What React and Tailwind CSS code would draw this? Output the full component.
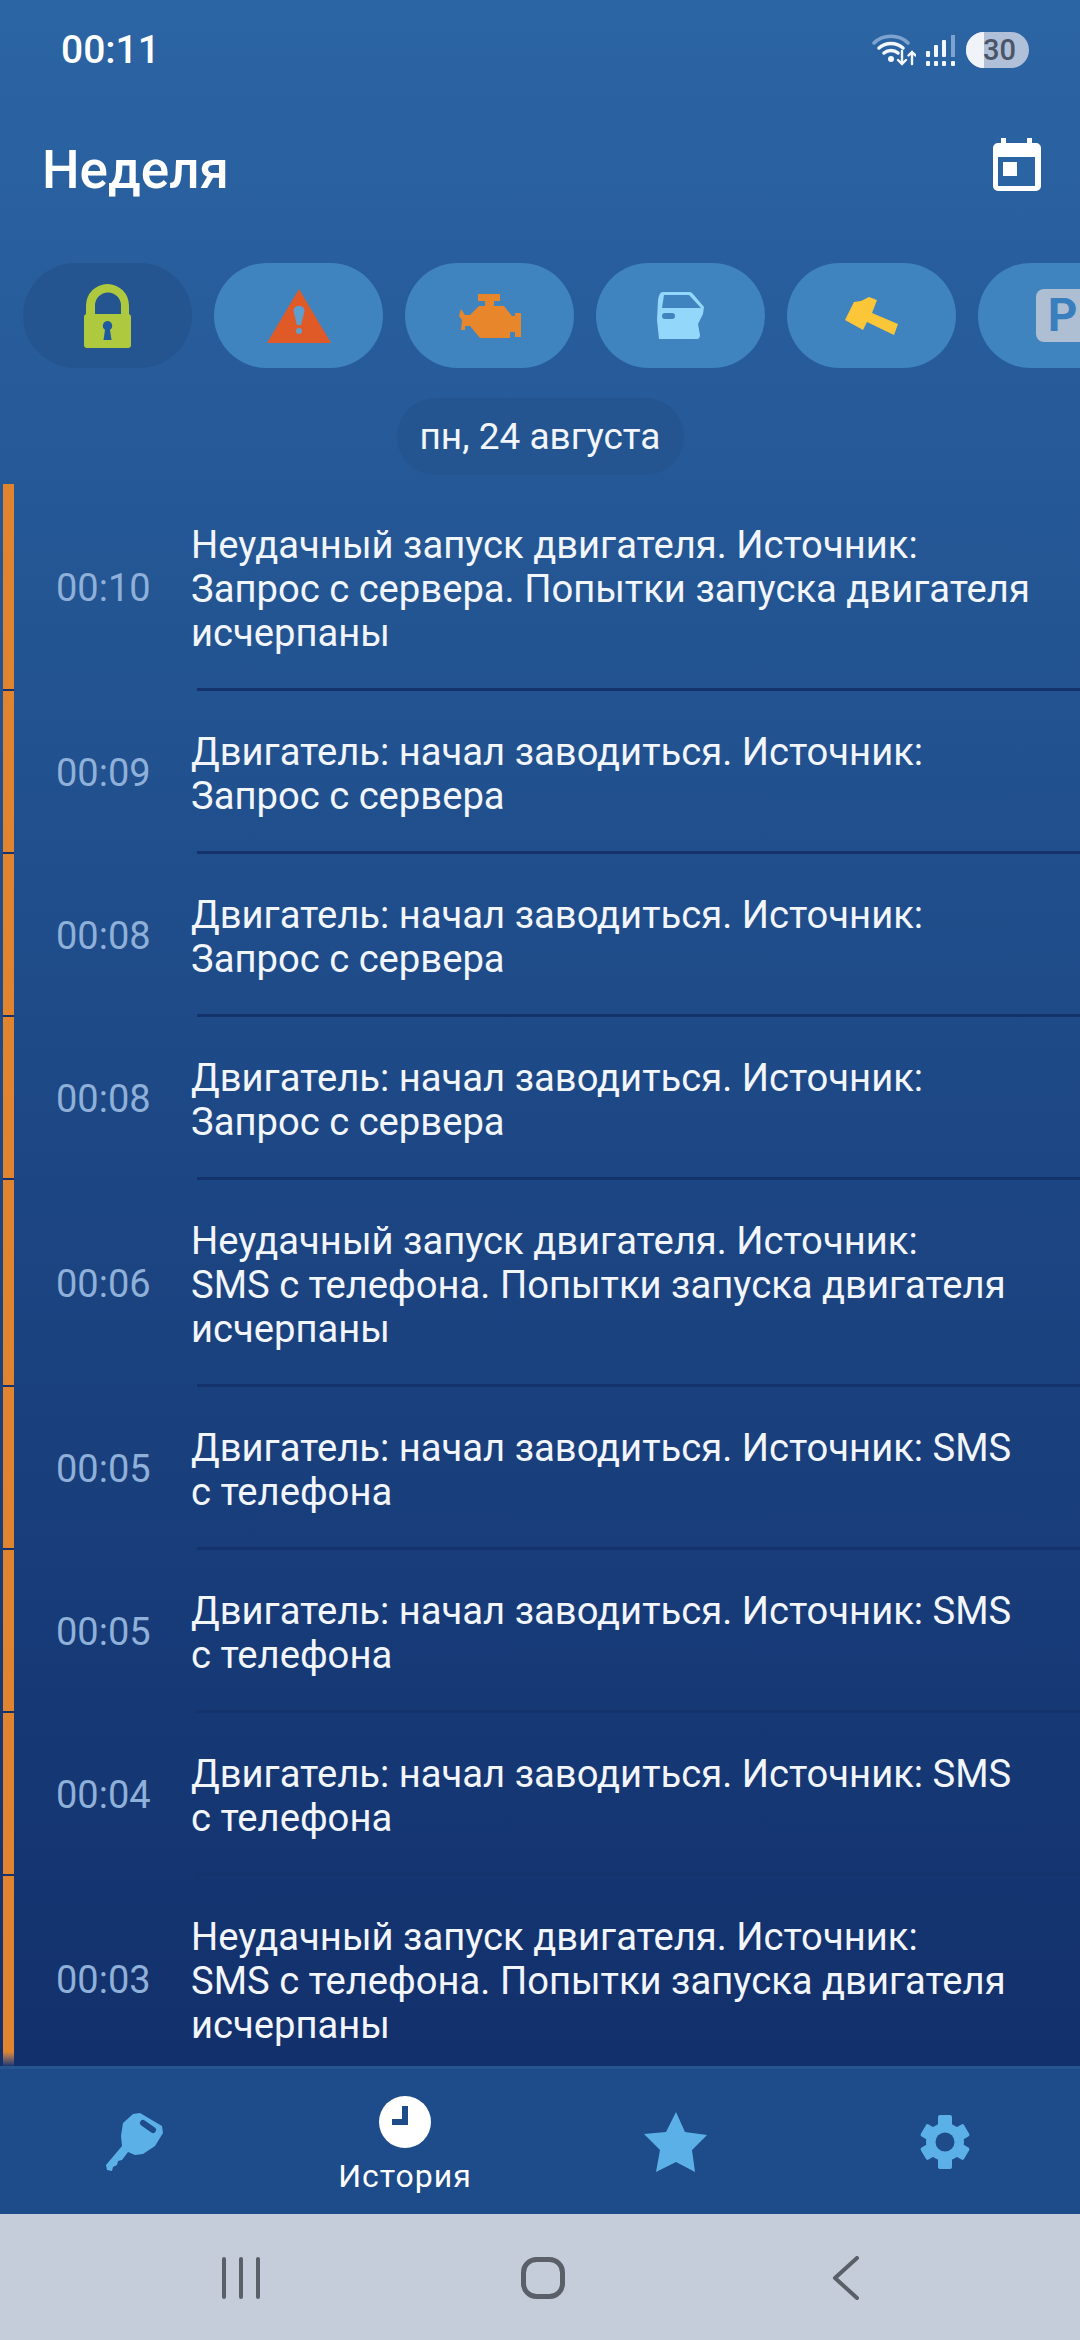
import React from 'react';

const ROWS = [
  { time: '00:10', lines: ['Неудачный запуск двигателя. Источник:', 'Запрос с сервера. Попытки запуска двигателя', 'исчерпаны'] },
  { time: '00:09', lines: ['Двигатель: начал заводиться. Источник:', 'Запрос с сервера'] },
  { time: '00:08', lines: ['Двигатель: начал заводиться. Источник:', 'Запрос с сервера'] },
  { time: '00:08', lines: ['Двигатель: начал заводиться. Источник:', 'Запрос с сервера'] },
  { time: '00:06', lines: ['Неудачный запуск двигателя. Источник:', 'SMS с телефона. Попытки запуска двигателя', 'исчерпаны'] },
  { time: '00:05', lines: ['Двигатель: начал заводиться. Источник: SMS', 'с телефона'] },
  { time: '00:05', lines: ['Двигатель: начал заводиться. Источник: SMS', 'с телефона'] },
  { time: '00:04', lines: ['Двигатель: начал заводиться. Источник: SMS', 'с телефона'] },
  { time: '00:03', lines: ['Неудачный запуск двигателя. Источник:', 'SMS с телефона. Попытки запуска двигателя', 'исчерпаны'] },
];

const LockIcon = () => (
  <svg width="47" height="64" viewBox="0 0 47 64">
    <path d="M2 32V21.500a21.500 21.500 0 0 1 43 0V32h-8V21.500a13 13 0 0 0-26 0V32z" fill="#aec93e" />
    <rect x="0" y="30" width="47" height="34" rx="3" fill="#aec93e" />
    <path d="M23.500 37a4.800 4.800 0 0 1 2.500 8.800l1.500 10.200h-8l1.500-10.200a4.800 4.800 0 0 1 2.500-8.800z" fill="#1f5aa0" />
  </svg>
);

const WarningIcon = () => (
  <svg width="64" height="54" viewBox="0 0 64 54">
    <path d="M32 0 64 54H0z" fill="#e05a28" />
    <path d="M32 17c3.500 0 5.500 2 5.500 5l-3.500 14h-4l-3.500-14c0-3 2-5 5.500-5z" fill="#5f9fd0" />
    <circle cx="32" cy="42" r="3" fill="#5f9fd0" />
  </svg>
);

const EngineIcon = () => (
  <svg width="62" height="44" viewBox="0 0 62 44">
    <path d="M19 0H41V7H35V12H45L53 22H56V19H62V43H56V38H51V44H21L11 32H6V36H2L3 26 0 22 2 15 6 21H11L20 12H26V7H19Z" fill="#e8862c" />
  </svg>
);

const DoorIcon = () => (
  <svg width="47" height="47" viewBox="0 0 47 47">
    <path d="M1 8C2 3 3 0 6 0h27c1 0 2 1 3 2l11 13-1 7-5 10 2 11c0 2-1 4-3 4H2L0 28z" fill="#93d7fb" />
    <path d="M5 16 7 3h25l12 13z" fill="#3f83bf" />
    <rect x="5" y="21" width="13" height="6" rx="3" fill="#3f83bf" />
  </svg>
);

const HammerIcon = () => (
  <svg width="53" height="38" viewBox="0 0 53 38">
    <path d="M0 23 9 5l7-1 8-4 8 3-5 13 26 11-4 11-27-13-4 8z" fill="#fbc738" />
  </svg>
);

const CHIPS = [
  { icon: <LockIcon />, active: true },
  { icon: <WarningIcon /> },
  { icon: <EngineIcon /> },
  { icon: <DoorIcon /> },
  { icon: <HammerIcon /> },
  {
    icon: (
      <div className="flex h-[53px] w-[53px] items-center justify-center rounded-[8px] bg-[#aebed3] text-[46px] font-bold text-[#3a7fbd]">
        P
      </div>
    ),
  },
];

function StatusBar() {
  return (
    <div className="flex h-[100px] shrink-0 items-center justify-between pl-[61px] pr-[51px]">
      <span className="text-[39px] font-medium text-white">00:11</span>
      <div className="flex items-center">
        <svg width="44" height="32" viewBox="0 0 44 32" fill="none" strokeLinecap="round">
          <path d="M2 9C11 0 27 0 36 9" stroke="#7fa3cf" strokeWidth="3.500" />
          <path d="M7 14c7-6 17-6 24 0" stroke="#f3f6fb" strokeWidth="3.500" />
          <path d="M12 19c4-3.500 10-3.500 14 0" stroke="#f3f6fb" strokeWidth="3.500" />
          <circle cx="19" cy="25" r="3" fill="#f3f6fb" />
          <path d="M30 17v13m-4-4 4 4 4-4M40 30V18m-3.500 3.500L40 18l3.500 3.500" stroke="#f3f6fb" strokeWidth="2.400" />
        </svg>
        <svg className="ml-[10px]" width="29" height="31" viewBox="0 0 29 31" fill="#f3f6fb">
          <rect x="0" y="16" width="4" height="6" rx="1" />
          <rect x="8" y="10" width="4" height="12" rx="1" />
          <rect x="16" y="5" width="4" height="17" rx="1" />
          <rect x="25" y="0" width="4" height="22" fill="#7fa3cf" />
          <rect x="0" y="26" width="4" height="5" rx="1" />
          <rect x="8" y="26" width="4" height="5" rx="1" />
          <rect x="16" y="26" width="4" height="5" rx="1" />
          <rect x="25" y="26" width="4" height="5" rx="1" />
        </svg>
        <div className="ml-[11px] flex h-[36px] w-[63px] overflow-hidden rounded-full bg-[#b0c0d8]">
          <div className="w-[18px] shrink-0 bg-[#f0f3f8]" />
          <span className="-ml-[1px] text-[29px] leading-[36px] font-medium text-[#4a5568]">30</span>
        </div>
      </div>
    </div>
  );
}

function Header() {
  return (
    <div className="flex h-[130px] shrink-0 items-start justify-between pr-[39px] pl-[42px] pt-[38px]">
      <h1 className="mt-[2px] text-[53px] leading-[60px] font-medium text-white">Неделя</h1>
      <svg width="48" height="53" viewBox="0 0 48 53">
        <path d="M8 0h5v5h21V0h5v5h4a5 5 0 0 1 5 5v38a5 5 0 0 1-5 5H5a5 5 0 0 1-5-5V10a5 5 0 0 1 5-5h3z" fill="#fff" />
        <rect x="5" y="19" width="37" height="29" fill="#2b64a3" />
        <rect x="10" y="24" width="14" height="14" fill="#fff" />
      </svg>
    </div>
  );
}

function EventRow({ time, lines, last }) {
  return (
    <div className="relative flex shrink-0 items-center pt-[38.5px] pb-[36.5px]">
      <div
        className={`absolute top-0 bottom-0 left-[3px] w-[11px] ${
          last
            ? 'bg-gradient-to-b from-[#e0842f] from-85% to-[#14326f] to-92%'
            : 'border-b-2 border-[#14336d] bg-[#e0842f]'
        }`}
      />
      <div className="w-[191px] shrink-0 pl-[56px] text-[38px] text-[#8fb0d8]">{time}</div>
      <div className="text-[38.2px] leading-[44px] text-[#f2f6fb]">
        {lines.map((line, i) => (
          <div key={i} className="whitespace-nowrap">{line}</div>
        ))}
      </div>
      {!last && <div className="absolute bottom-0 left-[197px] right-0 h-[3px] bg-[#14336d]" />}
    </div>
  );
}

function BottomNav() {
  return (
    <div className="flex h-[148px] shrink-0 items-center border-t-[3px] border-[#27558f] bg-[#1e4b89]">
      <div className="flex w-[270px] justify-center">
        <svg width="58" height="58" viewBox="0 0 58 58">
          <path d="M15 23 17 10 27 1 34 0 56 13 57 20 49 33 37 41 29 42 22 39 19 43 16 47 12 48 11 52 7 54 6 58 1 57 0 52 16 33Z" fill="#5cb0e8" />
          <path d="M37 10 47 17" stroke="#1e4b89" strokeWidth="6" strokeLinecap="round" />
        </svg>
      </div>
      <div className="flex w-[270px] flex-col items-center pt-[6px]">
        <svg width="52" height="52" viewBox="0 0 52 52">
          <circle cx="26" cy="26" r="26" fill="#fff" />
          <path d="M23 10h6v19H13v-6h10z" fill="#1e4b89" />
        </svg>
        <span className="mt-[10px] text-[32px] leading-[36px] tracking-[1px] text-white">История</span>
      </div>
      <div className="flex w-[270px] justify-center">
        <svg width="63" height="60" viewBox="0 0 63 60">
          <path d="M32 0 41 20 63 23 48 38 51 60 32 50 12 60 16 38 0 22 22 20Z" fill="#5cb0e8" />
        </svg>
      </div>
      <div className="flex w-[270px] justify-center">
        <svg width="54" height="54" viewBox="0 0 54 54">
          <g fill="#5cb0e8">
            <circle cx="27" cy="27" r="19" />
            <rect x="20" y="0" width="14" height="54" rx="2" />
            <rect x="20" y="2" width="14" height="50" rx="2" transform="rotate(60 27 27)" />
            <rect x="20" y="2" width="14" height="50" rx="2" transform="rotate(120 27 27)" />
          </g>
          <circle cx="27" cy="27" r="9.500" fill="#1e4b89" />
        </svg>
      </div>
    </div>
  );
}

function SystemBar() {
  return (
    <div className="flex h-[126px] shrink-0 items-center bg-[#c5cdda] pt-[2px]">
      <div className="flex w-[482px] justify-center">
        <svg width="44" height="42" viewBox="0 0 44 42" fill="#5a5f68">
          <rect x="3" y="0" width="4" height="42" rx="2" />
          <rect x="20" y="0" width="4" height="42" rx="2" />
          <rect x="37" y="0" width="4" height="42" rx="2" />
        </svg>
      </div>
      <div className="flex w-[122px] justify-center">
        <svg width="44" height="42" viewBox="0 0 44 42" fill="none">
          <rect x="2.500" y="2.500" width="39" height="37" rx="13" stroke="#5a5f68" strokeWidth="5" />
        </svg>
      </div>
      <div className="flex w-[476px] justify-center pl-[8px]">
        <svg width="28" height="44" viewBox="0 0 28 44" fill="none">
          <path d="M25 2 3 22l22 20" stroke="#5a5f68" strokeWidth="4" strokeLinecap="round" strokeLinejoin="round" />
        </svg>
      </div>
    </div>
  );
}

export default function App() {
  return (
    <div className="flex h-[2340px] w-[1080px] flex-col overflow-hidden font-['Roboto',sans-serif]">
      <div className="flex h-[2066px] shrink-0 flex-col overflow-hidden bg-gradient-to-b from-[#2c65a4] to-[#12306c]">
        <StatusBar />
        <Header />
        <div className="mt-[33px] flex shrink-0 gap-[22px] pl-[23px]">
          {CHIPS.map((chip, i) => (
            <div
              key={i}
              className={`flex h-[105px] w-[169px] shrink-0 items-center justify-center rounded-full ${
                chip.active ? 'bg-[#245590]' : 'bg-[#3f83bf]'
              }`}
            >
              {chip.icon}
            </div>
          ))}
        </div>
        <div className="mt-[30px] flex shrink-0 justify-center">
          <div className="flex h-[77px] w-[287px] items-center justify-center rounded-full bg-[#245590] text-[37px] text-[#f2f6fb]">
            пн, 24 августа
          </div>
        </div>
        <div className="mt-[9px] flex shrink-0 flex-col">
          {ROWS.map((row, i) => (
            <EventRow key={i} time={row.time} lines={row.lines} last={i === ROWS.length - 1} />
          ))}
        </div>
      </div>
      <BottomNav />
      <SystemBar />
    </div>
  );
}
